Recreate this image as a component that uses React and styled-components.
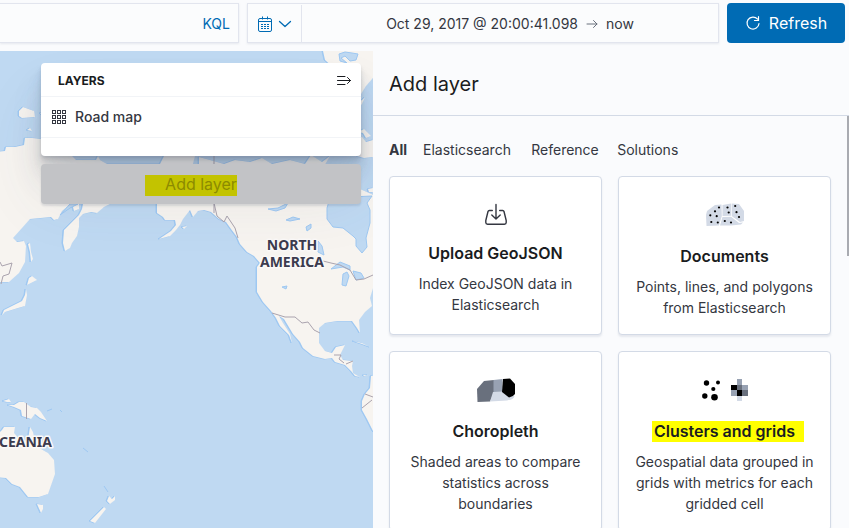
import React, { useState } from 'react';
import styled, { createGlobalStyle, css } from 'styled-components';

const GlobalStyle = createGlobalStyle`
  *, *::before, *::after { box-sizing: border-box; }
  body {
    margin: 0;
    background: #fafbfd;
    color: #343741;
    font-family: Inter, "Liberation Sans", sans-serif;
    font-size: 14px;
    line-height: 21px;
  }
  button, input { font: inherit; color: inherit; }
  button { border: 0; padding: 0; background: none; cursor: pointer; }
`;

const Page = styled.div`
  display: flex;
  flex-direction: column;
  height: 100vh;
  overflow: hidden;
`;

const QueryBar = styled.header`
  display: flex;
  gap: 8px;
  padding: 3px 4px 8px 0;
`;

const Field = styled.div`
  display: flex;
  height: 40px;
  min-width: 0;
  background: #fbfcfd;
  border: 1px solid #e2e5ee;
  box-shadow: 0 1px 2px rgba(152, 162, 179, 0.2);
`;

const SearchField = styled(Field)`
  flex: 239 1 0;
  border-left: 0;
`;

const SearchInput = styled.input`
  flex: 1;
  min-width: 0;
  border: 0;
  outline: 0;
  background: none;
  padding: 0 12px;
`;

const LanguageButton = styled.button`
  padding: 0 8px;
  color: #006bb4;
`;

const DateField = styled(Field)`
  flex: 472 1 0;
`;

const QuickSelect = styled.button`
  display: flex;
  align-items: center;
  gap: 5px;
  padding: 0 9px;
  margin: 1px 0 0;
  border-right: 1px solid #e2e5ee;
  color: #006bb4;
`;

const DateRange = styled.div`
  flex: 1;
  display: flex;
  align-items: center;
  justify-content: center;
  gap: 8px;
  white-space: nowrap;
`;

const RefreshButton = styled.button`
  display: flex;
  align-items: center;
  justify-content: center;
  gap: 8px;
  width: 118px;
  height: 40px;
  border-radius: 4px;
  background: #006bb4;
  color: #fff;
  font-size: 16px;
`;

const Workspace = styled.main`
  flex: 1;
  min-height: 0;
  display: grid;
  grid-template-columns: 373fr 476fr;
`;

const MapArea = styled.section`
  position: relative;
  overflow: hidden;
  background: #bfd9f2;
`;

const MapCanvas = styled.svg`
  position: absolute;
  inset: 0;
  width: 100%;
  height: 100%;
`;

const MapControls = styled.div`
  position: relative;
  display: flex;
  flex-direction: column;
  gap: 8px;
  max-width: 344px;
  margin-left: auto;
  padding: 12px;
`;

const LayerPanel = styled.div`
  padding-bottom: 18px;
  border-radius: 4px;
  background: #fff;
  box-shadow: 0 40px 64px rgba(65, 78, 101, 0.1), 0 24px 32px rgba(65, 78, 101, 0.1),
    0 16px 16px rgba(65, 78, 101, 0.1), 0 8px 8px rgba(65, 78, 101, 0.1),
    0 4px 4px rgba(65, 78, 101, 0.1), 0 2px 2px rgba(65, 78, 101, 0.1);
`;

const PanelHeader = styled.div`
  display: flex;
  align-items: center;
  justify-content: space-between;
  height: 34px;
  padding: 2px 9px 0 17px;
  border-bottom: 1px solid #f2f4f7;
`;

const PanelTitle = styled.h2`
  margin: 0;
  color: #1a1c21;
  font-size: 12px;
  font-weight: 700;
  line-height: 18px;
`;

const IconButton = styled.button`
  display: flex;
`;

const LayerRow = styled.button`
  display: flex;
  align-items: center;
  gap: 8px;
  width: 100%;
  height: 41px;
  padding: 0 10px 1px;
  border-bottom: 1px solid #f2f4f7;
  font-weight: 500;
`;

const AddLayerButton = styled.button`
  height: 40px;
  border-radius: 4px;
  background: #c2c3c6;
  color: #8a8c93;
  font-size: 16px;
  line-height: 20px;
  box-shadow: 0 2px 2px rgba(65, 78, 101, 0.15);
`;

const Marker = styled.mark`
  position: relative;
  z-index: 0;
  background: none;
  color: ${(p) => (p.$dim ? '#8c8b00' : '#1a1c21')};

  &::before {
    content: '';
    position: absolute;
    z-index: -1;
    ${(p) =>
      p.$dim
        ? css`
            inset: 1px 0 -2px -20px;
            background: #c3c300;
          `
        : css`
            inset: 0 -9px -1px -2px;
            background: #ffff00;
          `}
  }
`;

const Flyout = styled.aside`
  display: flex;
  flex-direction: column;
  min-width: 0;
  min-height: 0;
  background: #fafbfd;
`;

const FlyoutHeader = styled.div`
  padding: 17px 16px 15px;
  border-bottom: 1px solid #d3dae6;
`;

const FlyoutTitle = styled.h1`
  margin: 0;
  color: #1a1c21;
  font-size: 20px;
  font-weight: 400;
  line-height: 32px;
`;

const FlyoutBody = styled.div`
  position: relative;
  flex: 1;
  min-height: 0;
  overflow: hidden;
  padding: 23px 18px 0 16px;
`;

const ScrollThumb = styled.div`
  position: absolute;
  top: 0;
  right: 0;
  width: 2px;
  height: 34%;
  background: #a9abb1;
`;

const Tabs = styled.nav`
  display: flex;
  gap: 16px;
  margin-bottom: 16px;
`;

const Tab = styled.button`
  text-align: left;
  font-weight: ${(p) => (p.$active ? 700 : 400)};

  &::after {
    content: attr(data-label);
    display: block;
    height: 0;
    overflow: hidden;
    visibility: hidden;
    font-weight: 700;
  }
`;

const CardGrid = styled.div`
  display: grid;
  grid-template-columns: 1fr 1fr;
  gap: 16px;
`;

const Card = styled.button`
  display: flex;
  flex-direction: column;
  align-items: center;
  justify-content: center;
  gap: 8px;
  min-width: 0;
  padding: 16px;
  border: 1px solid #d3dae6;
  border-radius: 4px;
  background: #fff;
  box-shadow: 0 2px 2px rgba(152, 162, 179, 0.2);
`;

const CardIcon = styled.span`
  display: flex;
  align-items: center;
  justify-content: center;
  height: ${(p) => (p.$small ? 37 : 43)}px;
`;

const CardTitle = styled.span`
  color: #1a1c21;
  font-size: 16px;
  font-weight: 600;
  line-height: 24px;
`;

const CardText = styled.span``;

const Line = (props) => (
  <svg fill="none" stroke="currentColor" strokeLinecap="round" strokeLinejoin="round" {...props} />
);

function CalendarIcon() {
  return (
    <Line width="16" height="16" viewBox="0 0 16 16" strokeLinecap="butt">
      <rect x="1.5" y="2.5" width="13" height="13" rx="1.5" />
      <path d="M1.5 5.5h13M5.500 0.500v3M10.500 0.500v3" />
      <path d="M4 8.500h9M4 10.500h9M4 12.500h9" strokeDasharray="2 1" />
    </Line>
  );
}

function ChevronIcon() {
  return (
    <Line width="14" height="16" viewBox="0 0 14 16" strokeWidth="1.3">
      <path d="M1.500 5.500l5.500 5 5.500-5" />
    </Line>
  );
}

function ArrowIcon() {
  return (
    <Line width="12" height="12" viewBox="0 0 12 12" stroke="#69707d">
      <path d="M1 7h10M7.500 3.500L11 7l-3.500 3.500" />
    </Line>
  );
}

function RefreshIcon() {
  return (
    <Line width="16" height="16" viewBox="0 0 16 16" strokeWidth="1.2">
      <path d="M12.600 4.200A6 6 0 1 0 14 8.500M13.500 1.500v4H9.500" />
    </Line>
  );
}

function CollapseIcon() {
  return (
    <Line width="16" height="12" viewBox="0 0 16 12" stroke="#1a1c21">
      <path d="M1.500 1.500h7.500M1.500 5.500h13M1.500 9.500h7.500M11.500 2.500l3 3-3 3" />
    </Line>
  );
}

function GridIcon() {
  return (
    <Line width="16" height="16" viewBox="0 0 16 16" strokeLinejoin="miter">
      {[1.5, 6.5, 11.5].map((y) =>
        [1.5, 6.5, 11.5].map((x) => <rect key={`${x}-${y}`} x={x} y={y} width="3" height="3" />)
      )}
    </Line>
  );
}

function ImportIcon() {
  return (
    <Line width="24" height="24" viewBox="0 0 24 24" strokeWidth="1.400">
      <path d="M8.300 7.500H5.300Q4.300 7.500 4 8.500L1.800 17.500V19.500Q1.800 21.200 3.600 21.200H20.400Q22.200 21.200 22.200 19.500V17.500L20 8.500Q19.700 7.500 18.700 7.500H15.700" />
      <path d="M12 1.500v14.500M7.800 12l4.200 4 4.200-4" />
    </Line>
  );
}

const DOTS = [
  [13, 4.500], [21.500, 4.500], [29.200, 3], [9, 8.300], [22.700, 9.500], [30.500, 9.200],
  [4.300, 12.300], [10.700, 13.200], [33, 14], [5.300, 19], [11.800, 19.500], [18.800, 18], [25, 19.500],
];

function DocumentsIcon() {
  return (
    <svg width="38" height="24" viewBox="0 0 38 24">
      <g fill="#d3dae6">
        <path d="M0 12L1 8 9 2 15.500 1.500 15.800 13 13 22.500 0.500 23z" />
        <path d="M16.500 2L25 0.500V12.700L16.500 13z" />
        <path d="M25.700 0.500L33 1 38 8V18L34 19 25.700 13z" />
        <path d="M16.500 14L25 13.800 33 20 37 19.500 35 21.500 25 22.500 14 22.500z" />
      </g>
      {DOTS.map(([x, y]) => (
        <circle key={`${x}-${y}`} cx={x} cy={y} r="1.1" />
      ))}
    </svg>
  );
}

function ChoroplethIcon() {
  return (
    <svg width="38" height="24" viewBox="0 0 38 24">
      <path fill="#69707d" d="M0 11L7 3 17 2V15L13 23.500 0.500 24z" />
      <path fill="#98a2b3" d="M16.500 2L25.500 1V14H16.500z" />
      <path fill="#d3dae6" d="M16 14L25 13.500 37.500 18Q37 21.500 30 22.500L13 23.500z" />
      <path d="M26 1L33 0.500 38 6V16Q36 19 32 19.500L25 14z" />
    </svg>
  );
}

function ClustersIcon() {
  return (
    <svg width="46" height="24" viewBox="0 0 46 24">
      <circle cx="4.500" cy="5" r="2.700" />
      <circle cx="16" cy="4.500" r="2" />
      <circle cx="11.300" cy="11" r="2.100" />
      <circle cx="2.800" cy="18" r="2.700" />
      <circle cx="12.500" cy="19.300" r="3.300" />
      <g shapeRendering="crispEdges">
        <path fill="#98a2b3" d="M35 1h5v6h-5zM40 7h6v5h-6zM29 12h6v6h-6z" />
        <path fill="#69707d" d="M35 7h5v5h-5zM40 12h6v6h-6z" />
        <path d="M29 7h6v5h-6zM35 12h5v6h-5z" />
        <path fill="#d3dae6" d="M35 18h5v5h-5z" />
      </g>
    </svg>
  );
}

const LAND = [
  // Eurasia
  'M-4 152L5 151 6 147 15 147 24 145 25 138 32 138 42 139 60 140 72 156 76 160 96 160 98 156 100 160 107 164 160 164 164 156 195 156 190 175 155 190 110 204 104 207 97 213 91 212 83 214 79 218 79 227 77 236 72 243 70 248 65 251 63 243 64 230 71 223 79 215 82 209 83 204 79 204 79 209 74 211 73 207 67 207 62 211 58 219 54 220 51 217 30 219 22 228 13 238 17 242 24 241 26 246 25 262 19 273 9 282 -4 282Z',
  'M19 111L23 107 34 111 35 117 22 118 19 116Z',
  'M27 130L30 128 32 131Z',
  'M40 113L44 112 44 117Z',
  // Sakhalin, Hokkaido, Honshu
  'M28 244L30 243 31 252 33 259 31 262 30 252Z',
  'M29 278L32 276 37 280 31 283 27 285Z',
  'M26 289L27 295 25 306 18 308 5 312 2 315 4 310 16 304 22 301 25 295Z',
  // North America
  'M157 204L157 213 163 217 165 220 175 220 176 225 171 231 159 239 170 236 176 230 180 225 183 219 190 210 193 217 198 211 204 210 211 212 219 219 226 222 231 229 237 237 240 244 247 252 254 256 260 263 257 267 257 280 257 292 263 302 271 311 276 318 280 326 289 335 292 343 290 334 283 323 279 316 284 319 293 334 300 342 303 348 313 356 325 359 332 358 335 362 345 365 351 371 355 376 360 377 353 373 352 366 353 361 343 360 340 355 345 345 336 347 332 353 325 351 319 343 319 328 325 323 337 321 352 321 357 328 360 333 359 320 365 312 372 306 370 298 374 285 380 280 380 198 340 180 150 196Z',
  'M323 51L325 60 334 68 341 66 352 74 361 94 366 86 373 78 380 78 380 46Z',
  'M355 104L362 100 365 97 362 104 356 110Z',
  'M358 132L364 129 371 136 366 138 363 133Z',
  'M345 140L362 137 366 142 373 140 373 157 364 158 357 156 350 148Z',
  'M368 189L373 188 373 192 369 192ZM367 203L373 199 373 214 370 206Z',
  'M199 157L210 160 224 164 235 160 250 162 262 158 272 164 290 160 305 164 311 155 322 162 330 156 323 168 199 170Z',
  // Caribbean and South America
  'M353 341L362 343 370 347 362 344Z',
  'M363 375L368 375 364 376ZM380 374L371 376 370 388 365 394 362 401 362 410 367 419 373 431 380 438Z',
  'M182 227L187 226 184 229Z',
  // New Guinea, Australia, New Zealand
  'M3 401L9 399 11 402 7 402ZM8 405L14 405 19 402 24 402 31 407 37 408 41 412 47 421 40 418 35 414 31 419 22 416 21 410 14 407Z',
  'M-4 436L2 430 4 427 15 427 14 433 21 441 28 440 30 427 33 432 36 446 48 453 54 460 55 474 48 494 39 497 28 497 20 487 12 484 6 478 -4 477Z',
  'M37 504L43 505 43 509 41 513Z',
  'M109 496L112 499 115 496 115 500 110 504 107 501ZM104 507L106 509 95 523 90 521Z',
];

const LAKES = [
  'M330 198L327 208 327 219 333 227 343 228 353 236 356 239 356 246 362 253 367 247 366 238 370 223 370 210 367 203 372 196Z',
  'M268 209L278 208 288 203 285 208 276 211Z',
  'M286 220L293 217 300 219 290 221Z',
  'M306 227L311 224 311 228 307 231Z',
  'M318 241L322 246 324 255 318 252Z',
  'M331 269L340 262 350 266 350 270 343 267Z',
  'M343 274L347 272 349 276 346 286 342 285Z',
  'M353 271L361 273 364 278 356 280Z',
  'M282 287L287 286 286 289Z',
  'M339 54L345 52 352 53 358 54 356 60 350 61 345 56 341 58 347 63 340 61Z',
  'M60 215L70 204 78 204 70 208Z',
];

const BORDERS = [
  'M214 156V213M214 203L217 216 224 222 227 216 235 228 238 238',
  'M323 261L331 263 340 265 350 270 356 280 364 279 373 275',
  'M272 313L285 317 295 317 302 323 308 322 314 330 320 333',
  'M0 262L2 266 12 263 9 274 3 276 1 284',
  'M26.500 403V419',
  'M334 355L341 355 339 359 344 363M353 361L346 364M365 394L373 397M362 408L372 400',
];

function WorldMap() {
  return (
    <MapCanvas viewBox="0 51 373 477" preserveAspectRatio="xMaxYMin slice" aria-hidden="true">
      <g fill="#9ec8f2" stroke="#9ec8f2" strokeWidth="1" transform="translate(-1 0)">
        {LAND.map((d) => <path key={d} d={d} />)}
      </g>
      <g fill="#f7f4f0">
        {LAND.map((d) => <path key={d} d={d} />)}
      </g>
      <g fill="#bfd9f2" stroke="#9ec8f2" strokeWidth="1">
        {LAKES.map((d) => <path key={d} d={d} />)}
      </g>
      <g fill="none" stroke="#aaa3ae" strokeWidth="1">
        {BORDERS.map((d) => <path key={d} d={d} />)}
      </g>
      <path d="M83 448L88 452M104 486L108 492M47 411L52 409M60 410L62 412" stroke="#9ec8f2" />
      <g
        fill="#3c3b4e"
        stroke="#fbf9f8"
        strokeWidth="3"
        strokeLinejoin="round"
        paintOrder="stroke"
        fontFamily='"Noto Sans", sans-serif'
        fontSize="14"
        fontWeight="700"
        textAnchor="middle"
      >
        <text x="292" y="250">NORTH</text>
        <text x="292" y="267">AMERICA</text>
        <text x="52" y="447" textAnchor="end">CEANIA</text>
      </g>
    </MapCanvas>
  );
}

const TABS = ['All', 'Elasticsearch', 'Reference', 'Solutions'];

const SOURCES = [
  { title: 'Upload GeoJSON', text: 'Index GeoJSON data in Elasticsearch', icon: <ImportIcon />, small: true },
  { title: 'Documents', text: 'Points, lines, and polygons from Elasticsearch', icon: <DocumentsIcon /> },
  { title: 'Choropleth', text: 'Shaded areas to compare statistics across boundaries', icon: <ChoroplethIcon /> },
  {
    title: 'Clusters and grids',
    text: 'Geospatial data grouped in grids with metrics for each gridded cell',
    icon: <ClustersIcon />,
    marked: true,
  },
];

export default function App() {
  const [tab, setTab] = useState('All');
  const [query, setQuery] = useState('');

  return (
    <Page>
      <GlobalStyle />
      <QueryBar>
        <SearchField>
          <SearchInput aria-label="Search" value={query} onChange={(e) => setQuery(e.target.value)} />
          <LanguageButton>KQL</LanguageButton>
        </SearchField>
        <DateField>
          <QuickSelect aria-label="Date quick select">
            <CalendarIcon />
            <ChevronIcon />
          </QuickSelect>
          <DateRange>
            <button>Oct 29, 2017 @ 20:00:41.098</button>
            <ArrowIcon />
            <button>now</button>
          </DateRange>
        </DateField>
        <RefreshButton>
          <RefreshIcon />
          Refresh
        </RefreshButton>
      </QueryBar>
      <Workspace>
        <MapArea aria-label="Map">
          <WorldMap />
          <MapControls>
            <LayerPanel>
              <PanelHeader>
                <PanelTitle>LAYERS</PanelTitle>
                <IconButton aria-label="Collapse layers panel">
                  <CollapseIcon />
                </IconButton>
              </PanelHeader>
              <LayerRow>
                <GridIcon />
                Road map
              </LayerRow>
            </LayerPanel>
            <AddLayerButton disabled>
              <Marker $dim>Add layer</Marker>
            </AddLayerButton>
          </MapControls>
        </MapArea>
        <Flyout>
          <FlyoutHeader>
            <FlyoutTitle>Add layer</FlyoutTitle>
          </FlyoutHeader>
          <FlyoutBody>
            <Tabs>
              {TABS.map((name) => (
                <Tab key={name} data-label={name} $active={tab === name} onClick={() => setTab(name)}>
                  {name}
                </Tab>
              ))}
            </Tabs>
            <CardGrid>
              {SOURCES.map((s) => (
                <Card key={s.title}>
                  <CardIcon $small={s.small}>{s.icon}</CardIcon>
                  <CardTitle>{s.marked ? <Marker>{s.title}</Marker> : s.title}</CardTitle>
                  <CardText>{s.text}</CardText>
                </Card>
              ))}
            </CardGrid>
            <ScrollThumb />
          </FlyoutBody>
        </Flyout>
      </Workspace>
    </Page>
  );
}
